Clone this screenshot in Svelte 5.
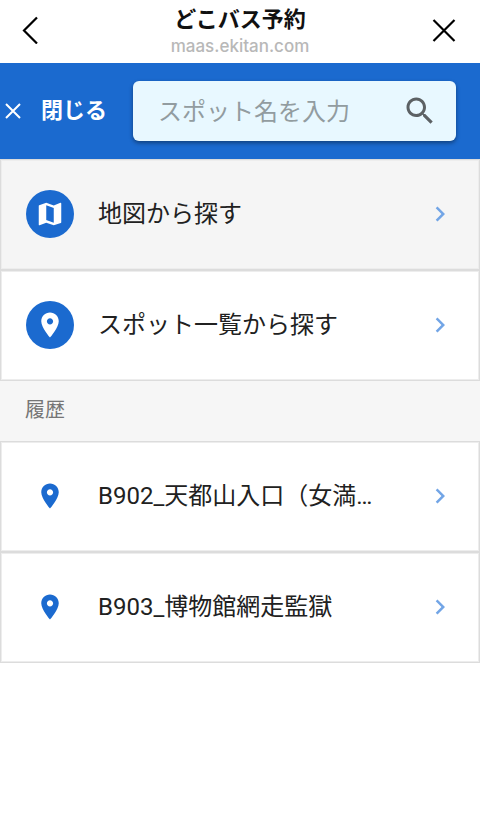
<script>
	let keyword = $state('');

	const menu = [
		{ name: '地図から探す', icon: 'map', active: true },
		{ name: 'スポット一覧から探す', icon: 'pin', active: false },
	];

	const history = [
		{ id: 'B902', name: 'B902_天都山入口（女満…' },
		{ id: 'B903', name: 'B903_博物館網走監獄' },
	];

	const icons = {
		map: 'M20.5 3l-.16.03L15 5.1 9 3 3.36 4.9c-.21.07-.36.25-.36.48V20.5c0 .28.22.5.5.5l.16-.03L9 18.9l6 2.1 5.64-1.9c.21-.07.36-.25.36-.48V3.5c0-.28-.22-.5-.5-.5zM15 19l-6-2.11V5l6 2.11V19z',
		pin: 'M12 2C8.13 2 5 5.13 5 9c0 5.25 7 13 7 13s7-7.75 7-13c0-3.87-3.13-7-7-7zm0 9.5c-1.38 0-2.5-1.12-2.5-2.5s1.12-2.5 2.5-2.5 2.5 1.12 2.5 2.5-1.12 2.5-2.5 2.5z',
		chevron: 'M10 6L8.59 7.41 13.17 12l-4.58 4.59L10 18l6-6z',
		search: 'M15.5 14h-.79l-.28-.27C15.41 12.59 16 11.11 16 9.5 16 5.91 13.09 3 9.5 3S3 5.91 3 9.5 5.91 16 9.5 16c1.61 0 3.09-.59 4.23-1.57l.27.28v.79l5 4.99L20.49 19l-4.99-5zm-6 0C7.01 14 5 11.99 5 9.5S7.01 5 9.5 5 14 7.01 14 9.5 11.99 14 9.5 14z',
	};
</script>

{#snippet row(name, icon, round, active)}
	<li>
		<a href="#spot" class="row" class:active>
			<span class="icon" class:round>
				<svg viewBox="0 0 24 24"><path d={icons[icon]} /></svg>
			</span>
			<span class="name">{name}</span>
			<svg class="chevron" viewBox="0 0 24 24"><path d={icons.chevron} /></svg>
		</a>
	</li>
{/snippet}

<header class="titlebar">
	<button aria-label="戻る">
		<svg viewBox="0 0 28 28"><path d="M19 1.500L6 14.500L19 27.500" /></svg>
	</button>
	<div class="title">
		<h1>どこバス予約</h1>
		<p>maas.ekitan.com</p>
	</div>
	<button aria-label="ウィンドウを閉じる">
		<svg viewBox="0 0 28 28"><path d="M3.500 4L24.500 25M24.500 4L3.500 25" /></svg>
	</button>
</header>

<div class="toolbar">
	<button class="close">
		<svg viewBox="0 0 16 16"><path d="M1 1L15 15M15 1L1 15" /></svg>
		閉じる
	</button>
	<form class="search" onsubmit={(e) => e.preventDefault()}>
		<input type="text" aria-label="スポット名" placeholder="スポット名を入力" bind:value={keyword} />
		<button aria-label="検索">
			<svg viewBox="0 0 24 24"><path d={icons.search} /></svg>
		</button>
	</form>
</div>

<main>
	<ul>
		{#each menu as item}
			{@render row(item.name, item.icon, true, item.active)}
		{/each}
	</ul>
	<h2>履歴</h2>
	<ul>
		{#each history as item (item.id)}
			{@render row(item.name, 'pin', false, false)}
		{/each}
	</ul>
</main>

<style>
	:global(body) {
		background: #fff;
		color: #212121;
		font-family: Roboto, "Noto Sans CJK JP", sans-serif;
	}
	button {
		padding: 0;
		border: none;
		background: none;
		font-family: inherit;
		cursor: pointer;
	}
	svg {
		display: block;
		fill: currentColor;
	}
	.titlebar {
		display: flex;
		align-items: center;
		justify-content: space-between;
		height: 63px;
		padding: 0 22px 4px 18px;
		box-sizing: border-box;
	}
	.titlebar button {
		color: #000;
	}
	.titlebar svg {
		width: 28px;
		height: 28px;
		fill: none;
		stroke: currentColor;
		stroke-width: 2.2;
	}
	.title {
		padding-left: 4px;
		text-align: center;
	}
	h1 {
		margin: 0;
		font-size: 22px;
		line-height: 32px;
		font-weight: 700;
		color: #111;
	}
	.title p {
		margin: 0;
		font-family: Inter, sans-serif;
		font-size: 17px;
		line-height: 20px;
		font-weight: 500;
		color: #b8b8b8;
	}
	.toolbar {
		display: flex;
		align-items: center;
		gap: 26px;
		padding: 18px 24px 18px 5px;
		background: #1b6acf;
	}
	.close {
		display: flex;
		align-items: center;
		gap: 20px;
		flex-shrink: 0;
		font-size: 22px;
		line-height: 32px;
		font-weight: 700;
		color: #fff;
	}
	.close svg {
		width: 16px;
		height: 16px;
		fill: none;
		stroke: currentColor;
		stroke-width: 2;
	}
	.search {
		display: flex;
		align-items: center;
		flex: 1;
		min-width: 0;
		height: 60px;
		padding: 0 18px 0 25px;
		box-sizing: border-box;
		border-radius: 6px;
		background: #e8f8ff;
		box-shadow: 0 2px 4px rgba(0, 0, 0, 0.4);
	}
	.search input {
		flex: 1;
		min-width: 0;
		padding: 2px 0 0;
		border: none;
		outline: none;
		background: none;
		font-family: inherit;
		font-size: 24px;
		color: #212121;
	}
	.search input::placeholder {
		color: #929ca0;
		opacity: 1;
	}
	.search button {
		color: #5c6164;
	}
	.search svg {
		width: 36px;
		height: 36px;
	}
	ul {
		margin: 0;
		padding: 0;
		list-style: none;
	}
	.row {
		display: flex;
		align-items: center;
		gap: 24px;
		height: 111px;
		padding: 0 24px 2px 25px;
		box-sizing: border-box;
		border: 1px solid #dcdcdc;
		box-shadow: inset 0 0 0 1px #ededed;
		color: inherit;
		text-decoration: none;
	}
	.row.active {
		background: #f5f5f5;
	}
	.icon {
		display: flex;
		align-items: center;
		justify-content: center;
		flex-shrink: 0;
		width: 48px;
		height: 48px;
		border-radius: 50%;
		color: #1b6acf;
	}
	.icon.round {
		background: #1b6acf;
		color: #fff;
	}
	.icon svg {
		width: 30px;
		height: 30px;
	}
	.name {
		flex: 1;
		overflow: hidden;
		white-space: nowrap;
		text-overflow: ellipsis;
		font-size: 24px;
		line-height: 36px;
	}
	.chevron {
		width: 30px;
		height: 30px;
		flex-shrink: 0;
		color: #72a5e6;
	}
	h2 {
		margin: 0;
		padding: 13px 25px 15px;
		background: #f6f6f6;
		font-size: 20px;
		line-height: 32px;
		font-weight: 400;
		color: #757575;
	}
</style>
